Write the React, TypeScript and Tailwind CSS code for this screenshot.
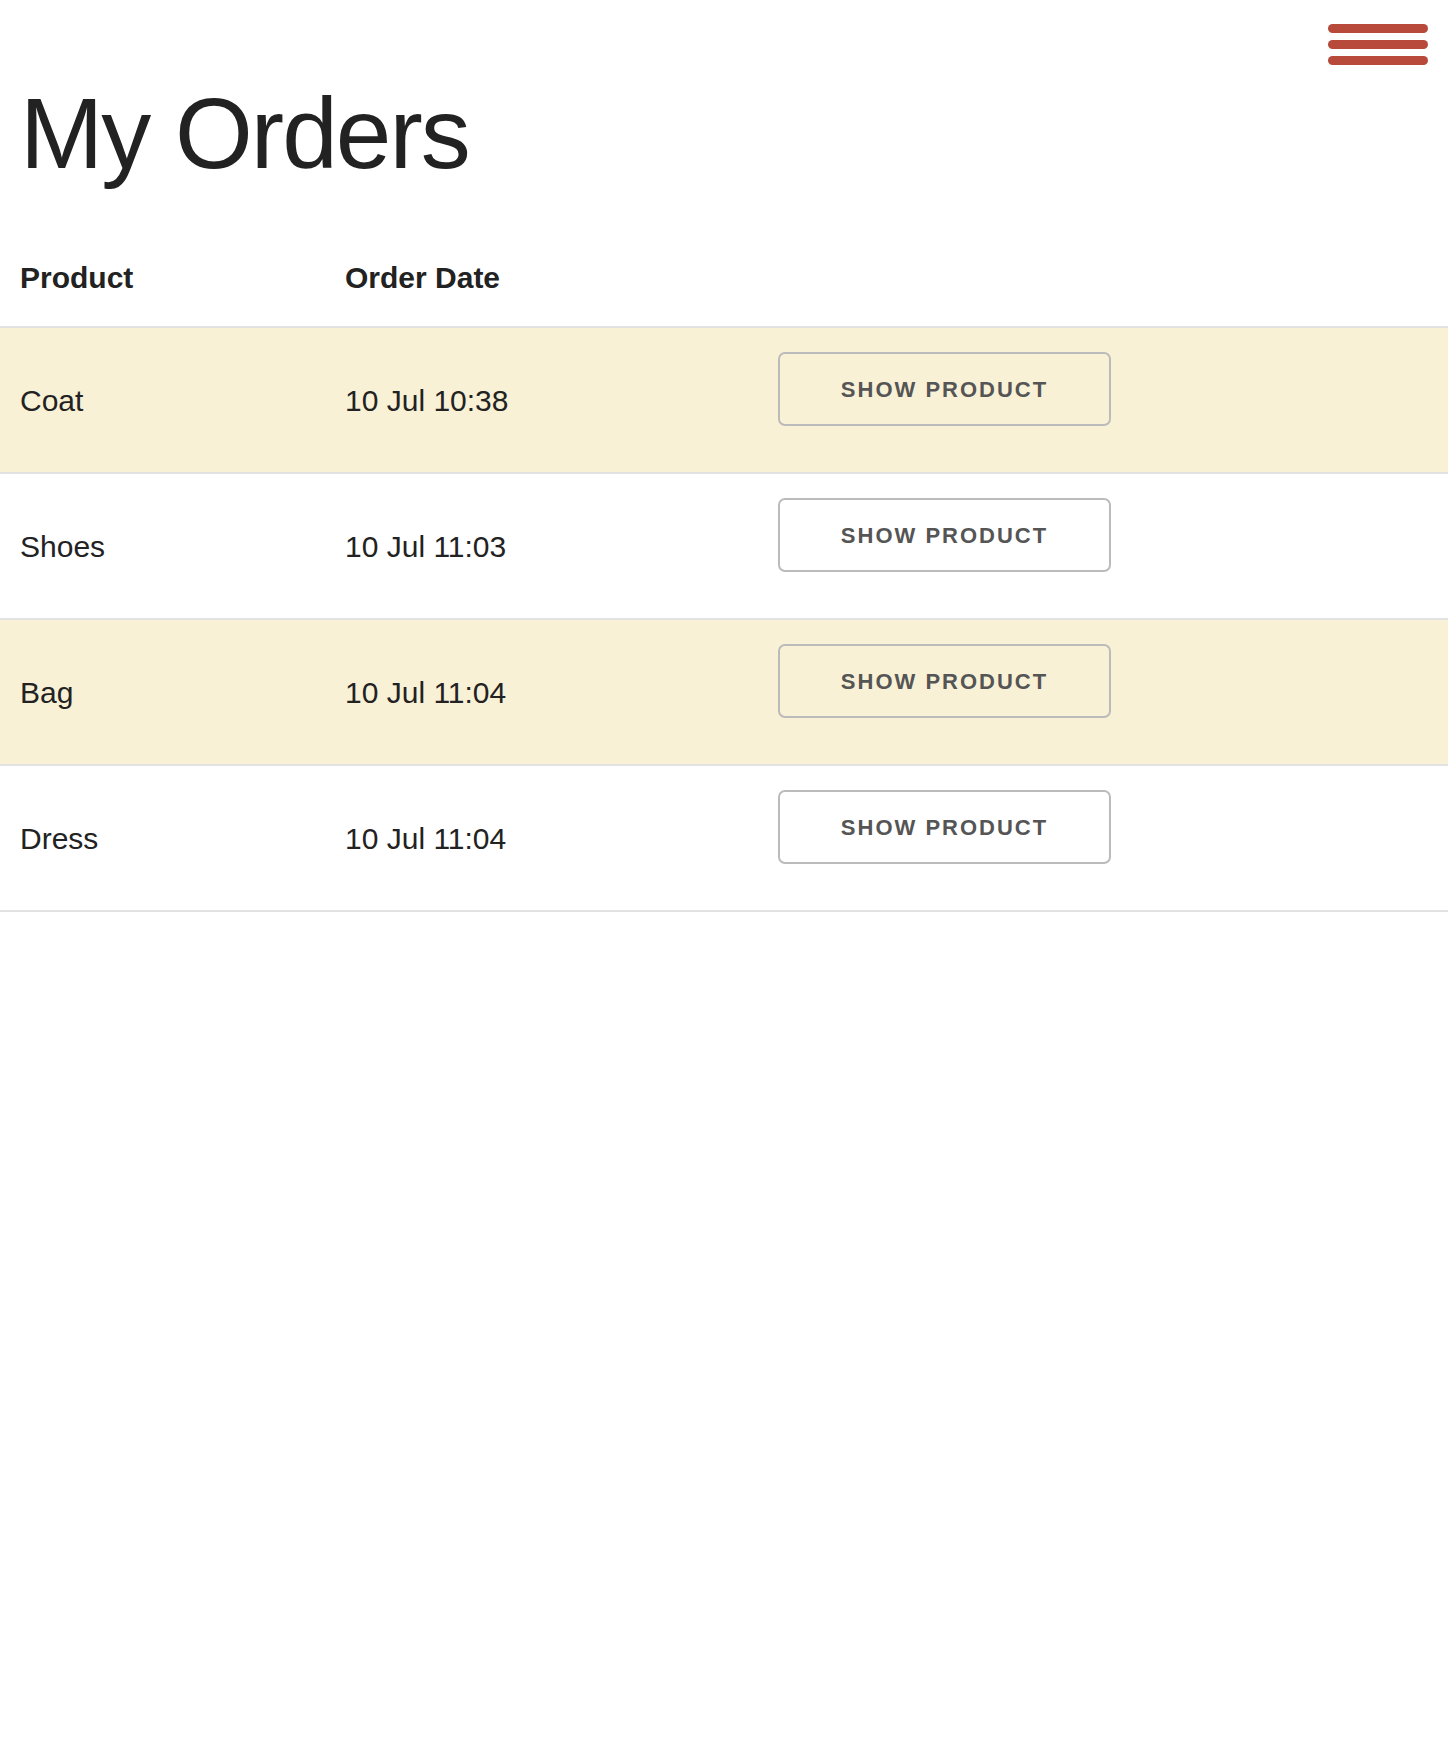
import React from 'react';

const orders = [
  { product: 'Coat', date: '10 Jul 10:38' },
  { product: 'Shoes', date: '10 Jul 11:03' },
  { product: 'Bag', date: '10 Jul 11:04' },
  { product: 'Dress', date: '10 Jul 11:04' },
];

const App = () => {
  return (
    <div className="min-h-screen bg-white text-[#222] font-['Liberation_Sans',Arial,sans-serif]">
      {/* Top bar */}
      <header className="flex justify-end pt-[24px] pr-[20px]">
        <button className="flex flex-col gap-[7px] w-[100px]" aria-label="Menu">
          <span className="block h-[9px] w-full rounded-full bg-[#b84a3b]" />
          <span className="block h-[9px] w-full rounded-full bg-[#b84a3b]" />
          <span className="block h-[9px] w-full rounded-full bg-[#b84a3b]" />
        </button>
      </header>

      <h1 className="mt-[18px] pl-[20px] text-[100px] leading-[100px] tracking-[-2px] font-normal">
        My Orders
      </h1>

      {/* Table */}
      <div className="mt-[48px]">
        <div className="grid grid-cols-[345px_433px_1fr] h-[97px] items-center border-b-2 border-[#e2e2e2] text-[30px] font-bold">
          <div className="pl-[20px] pb-[2px]">Product</div>
          <div className="pb-[2px]">Order Date</div>
          <div />
        </div>

        {orders.map((o, i) => (
          <div
            key={i}
            className={`grid grid-cols-[345px_433px_1fr] h-[146px] items-center border-b-2 border-[#e2e2e2] text-[30px] ${
              i % 2 === 0 ? 'bg-[#f9f1d6]' : 'bg-white'
            }`}
          >
            <div className="pl-[20px]">{o.product}</div>
            <div>{o.date}</div>
            <div className="flex">
              <button className="mb-[22px] w-[333px] h-[74px] rounded-[7px] border-2 border-[#bbbbbb] bg-transparent text-[22px] font-bold tracking-[2px] text-[#555]">
                SHOW PRODUCT
              </button>
            </div>
          </div>
        ))}
      </div>
    </div>
  );
};

export default App;
